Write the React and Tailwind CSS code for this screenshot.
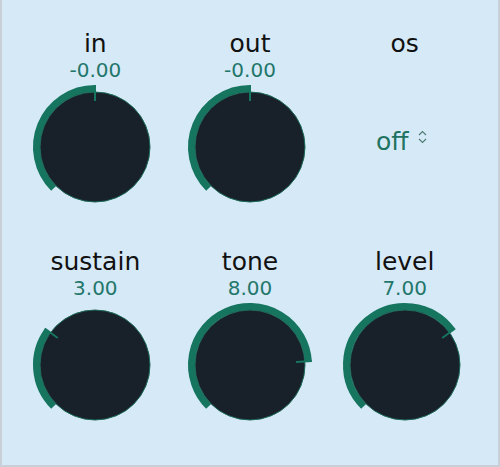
import React from "react";

// knob geometry: 270° sweep, starting bottom-left
const START = -135;
const SWEEP = 270;

function polar(cx, cy, r, deg) {
  const a = ((deg - 90) * Math.PI) / 180;
  return [cx + r * Math.cos(a), cy + r * Math.sin(a)];
}

function arcPath(cx, cy, r, a0, a1) {
  const [x0, y0] = polar(cx, cy, r, a0);
  const [x1, y1] = polar(cx, cy, r, a1);
  const large = a1 - a0 > 180 ? 1 : 0;
  return `M ${x0} ${y0} A ${r} ${r} 0 ${large} 1 ${x1} ${y1}`;
}

function Knob({ value, min, max }) {
  const t = (value - min) / (max - min);
  const angle = START + SWEEP * t;
  const [tx0, ty0] = polar(65, 65, 62, angle);
  const [tx1, ty1] = polar(65, 65, 46, angle);
  return (
    <svg width="130" height="130" viewBox="0 0 130 130">
      <path d={arcPath(65, 65, 58.5, START, angle)} fill="none" stroke="#15755f" strokeWidth="7" />
      <circle cx="65" cy="65" r="55" fill="#18202a" stroke="#1c6a58" strokeWidth="1" />
      <line x1={tx0} y1={ty0} x2={tx1} y2={ty1} stroke="#15755f" strokeWidth="2" />
    </svg>
  );
}

function KnobCell({ label, value, min, max, text }) {
  return (
    <div className="flex flex-col items-center">
      <div className="text-[25px] leading-[28px] text-[#111]">{label}</div>
      <div className="text-[20px] leading-[24px] text-[#23776a]">{text}</div>
      <Knob value={value} min={min} max={max} />
    </div>
  );
}

export default function App() {
  return (
    <div
      className="w-[500px] h-[467px] bg-[#d6e9f7] border-l-2 border-r-2 border-b-2 border-[#c9cfd6] px-[16px] pt-[30px]"
      style={{ fontFamily: '"DejaVu Sans", sans-serif' }}
    >
      <div className="grid grid-cols-3 gap-y-[36px]">
        <KnobCell label="in" text="-0.00" value={0} min={-24} max={24} />
        <KnobCell label="out" text="-0.00" value={0} min={-24} max={24} />
        <div className="flex flex-col items-center">
          <div className="text-[25px] leading-[28px] text-[#111]">os</div>
          <div className="mt-[69px] mr-[6px] flex items-start gap-[10px] text-[25px] leading-[30px] text-[#1f7360]">
            <span>off</span>
            <svg width="9" height="14" viewBox="0 0 9 14" className="mt-[3px]">
              <path d="M1 5 L4.5 1.5 L8 5 M1 9 L4.5 12.5 L8 9" fill="none" stroke="#4f7d76" strokeWidth="1.2" />
            </svg>
          </div>
        </div>
        <KnobCell label="sustain" text="3.00" value={3} min={0} max={10} />
        <KnobCell label="tone" text="8.00" value={8.2} min={0} max={10} />
        <KnobCell label="level" text="7.00" value={7} min={0} max={10} />
      </div>
    </div>
  );
}
